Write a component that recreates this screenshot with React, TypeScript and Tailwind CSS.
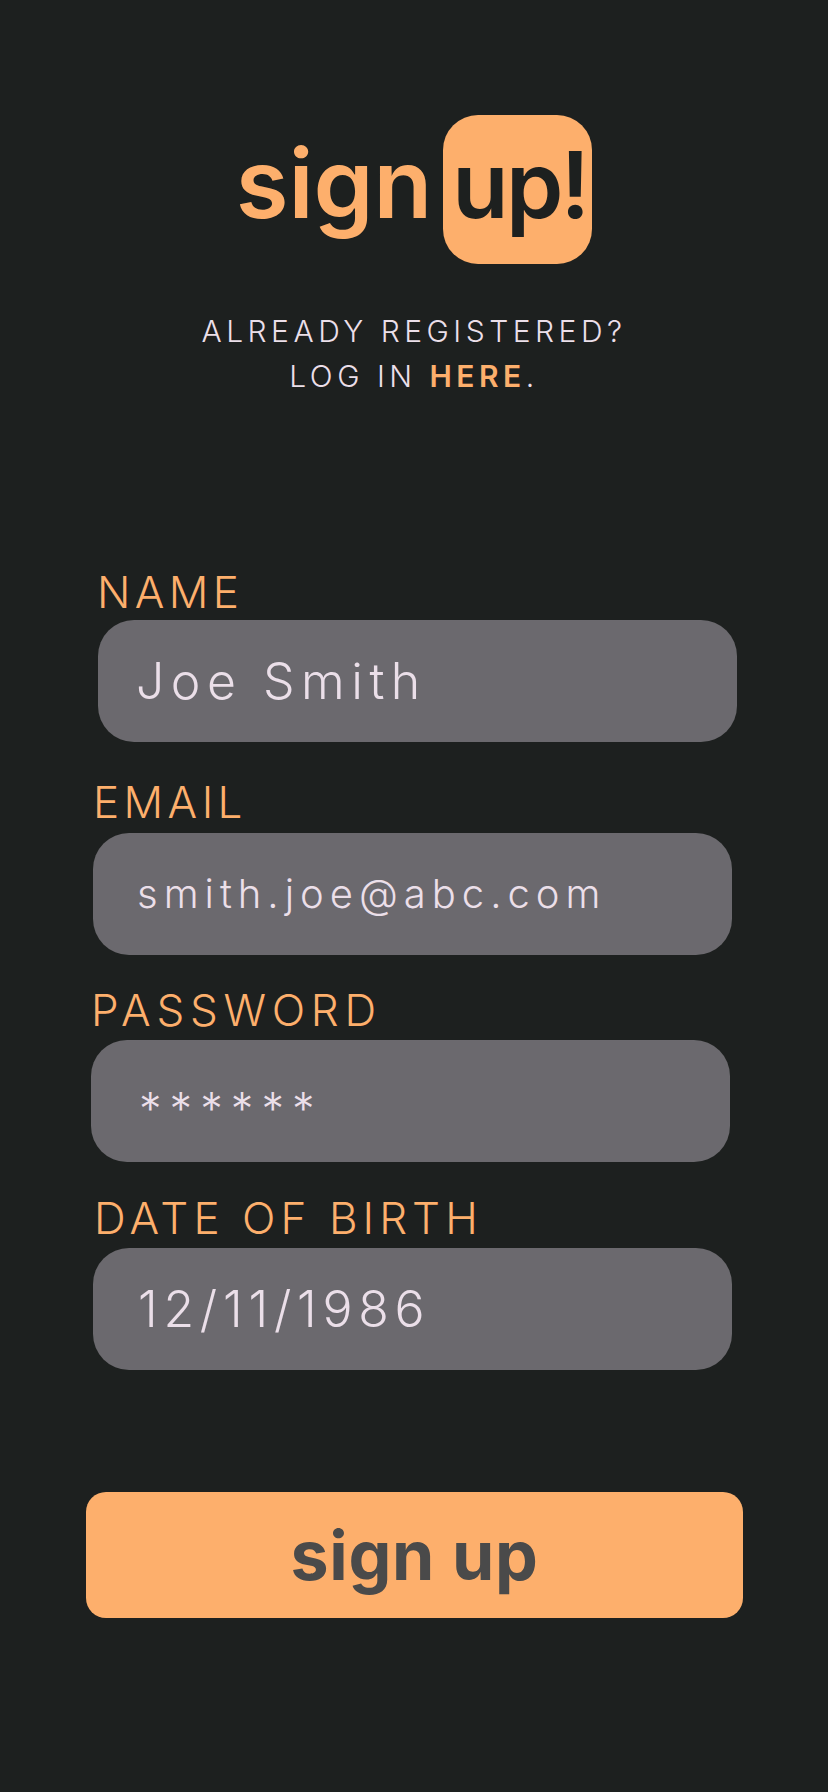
import React from "react";

type FieldProps = {
  label: string;
  value: string;
  labelMl: string;
  labelTracking: string;
  boxMl: string;
  boxPl: string;
  mt: string;
  gap: string;
  textClass: string;
};

function Field({ label, value, labelMl, labelTracking, boxMl, boxPl, mt, gap, textClass }: FieldProps) {
  return (
    <div className={mt}>
      <div className={`${labelMl} ${labelTracking} text-[44px] leading-[45px] font-light text-[#fdaf6c]`}>
        {label}
      </div>
      <div
        className={`${boxMl} ${boxPl} ${gap} flex h-[122px] w-[639px] items-center rounded-[36px] bg-[#6b696e]`}
      >
        <span className={textClass}>{value}</span>
      </div>
    </div>
  );
}

export default function App() {
  return (
    <div className="min-h-screen w-full bg-[#1d201f] font-['Inter',sans-serif]">
      {/* logo */}
      <header className="flex flex-col items-center pt-[115px]">
        <div className="flex items-baseline text-[96px] leading-none font-semibold">
          <span className="text-[#fdaf6c]">sign</span>
          <span className="ml-[11px] h-[149px] w-[149px] rounded-[35px] bg-[#fdaf6c] pl-[9px] pt-[20px] text-[#1d201f]">
            <span className="text-[92px] tracking-[-0.03em]">up!</span>
          </span>
        </div>
        <p className="mt-[45px] text-center text-[30px] leading-[45px] font-light uppercase tracking-[0.15em] text-[#ebdfe9]">
          Already registered?
          <br />
          Log in <span className="font-semibold text-[#fdaf6c]">here</span>.
        </p>
      </header>

      {/* form */}
      <form className="flex flex-col">
        <Field
          label="NAME"
          value="Joe Smith"
          labelMl="ml-[97px]"
          labelTracking="tracking-[0.1em]"
          boxMl="ml-[98px]"
          boxPl="pl-[38px]"
          mt="mt-[171px]"
          gap="mt-[5px]"
          textClass="text-[50px] font-light tracking-[0.13em] text-[#ebdfe9]"
        />
        <Field
          label="EMAIL"
          value="smith.joe@abc.com"
          labelMl="ml-[93px]"
          labelTracking="tracking-[0.1em]"
          boxMl="ml-[93px]"
          boxPl="pl-[44px]"
          mt="mt-[38px]"
          gap="mt-[8px]"
          textClass="text-[40px] font-light tracking-[0.15em] text-[#ebdfe9]"
        />
        <Field
          label="PASSWORD"
          value="******"
          labelMl="ml-[91px]"
          labelTracking="tracking-[0.13em]"
          boxMl="ml-[91px]"
          boxPl="pl-[48px]"
          mt="mt-[33px]"
          gap="mt-[7px]"
          textClass="mt-[16px] text-[45px] font-light tracking-[0.18em] text-[#ebdfe9]"
        />
        <Field
          label="DATE OF BIRTH"
          value="12/11/1986"
          labelMl="ml-[94px]"
          labelTracking="tracking-[0.115em]"
          boxMl="ml-[93px]"
          boxPl="pl-[45px]"
          mt="mt-[34px]"
          gap="mt-[7px]"
          textClass="text-[50px] font-light tracking-[0.115em] text-[#ebdfe9]"
        />
        <button
          type="button"
          className="mt-[122px] ml-[86px] flex h-[126px] w-[657px] items-center justify-center rounded-[20px] bg-[#fdaf6c] text-[68px] font-bold tracking-[0.01em] text-[#4a4a4a]"
        >
          sign up
        </button>
      </form>
    </div>
  );
}
